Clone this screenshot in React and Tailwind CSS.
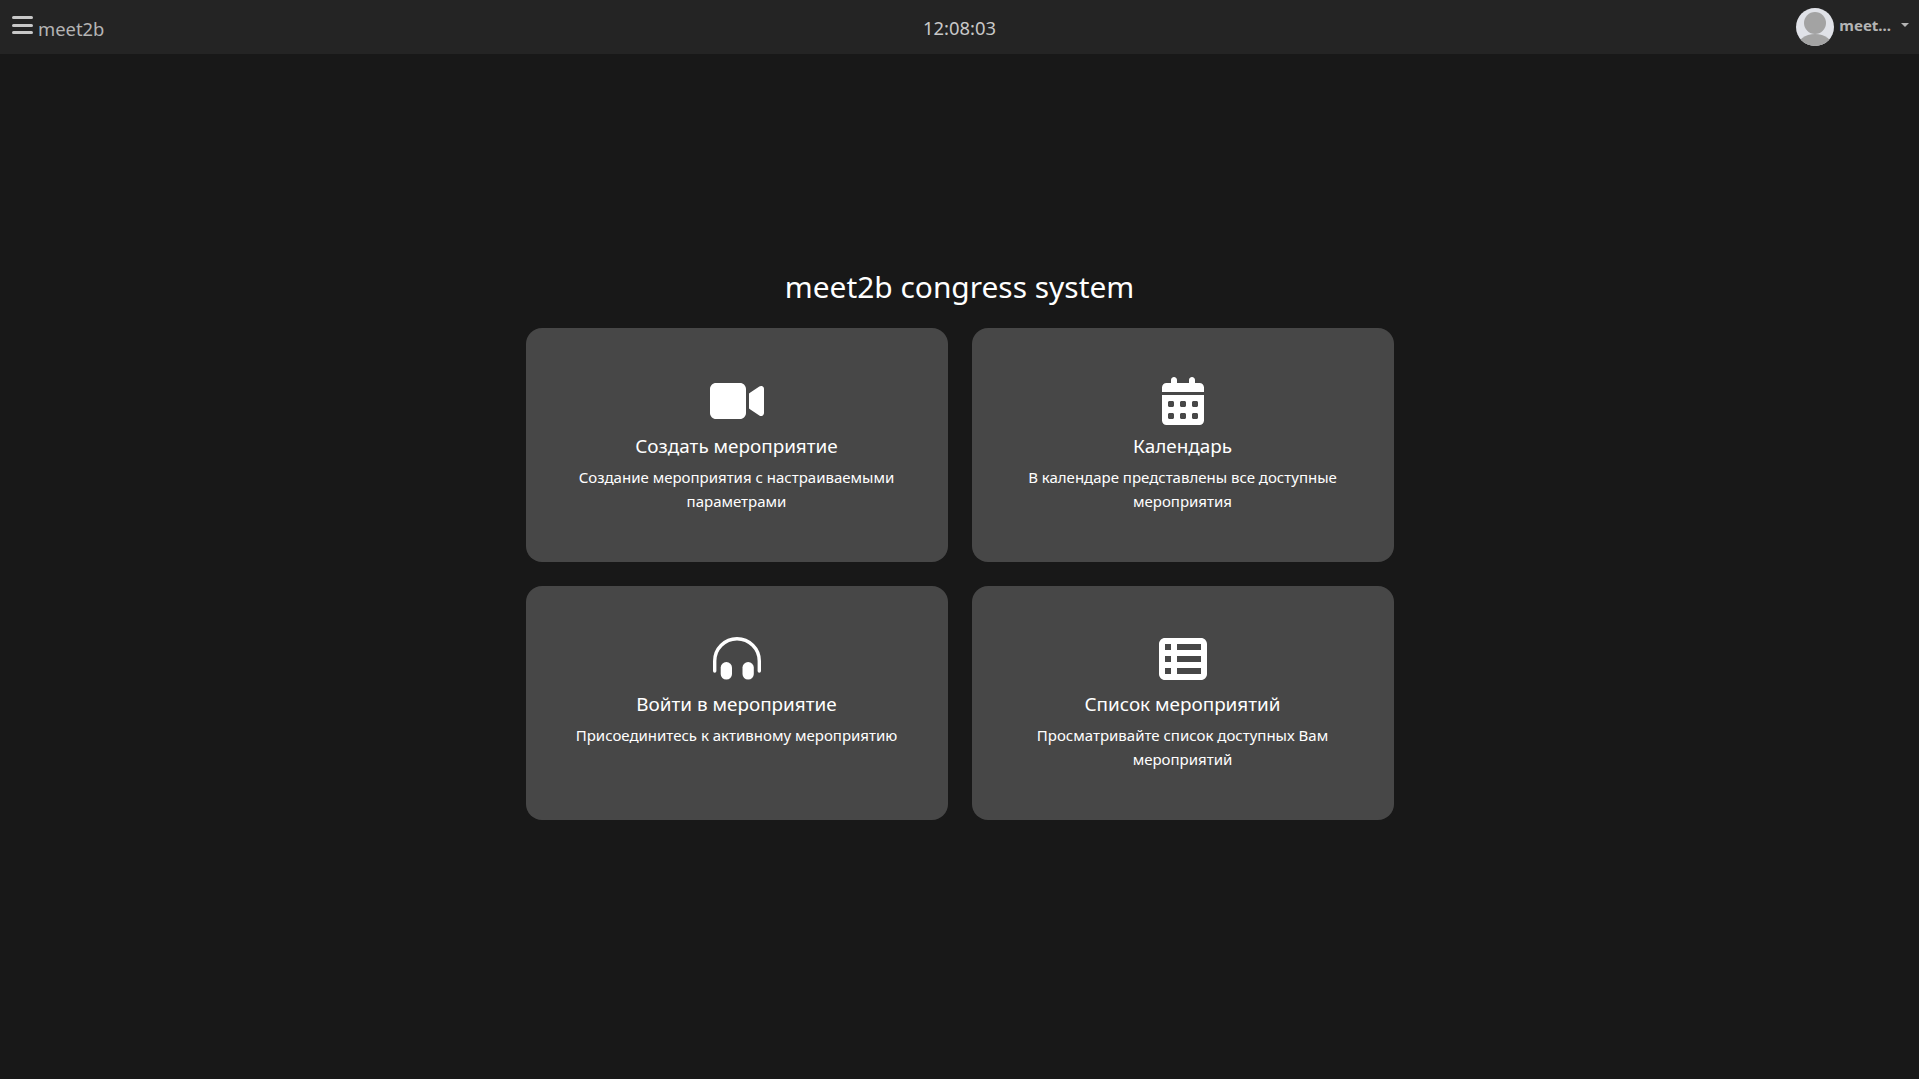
import { FaVideo, FaCalendarDays, FaTableList } from "react-icons/fa6";

// thin-arc headphones, the fa6 one has a heavier band than the reference
function Headphones({ className }) {
  return (
    <svg viewBox="0 0 48 48" className={className} fill="currentColor">
      <path
        d="M1.7 36V26a22.3 22.3 0 0 1 44.6 0V36"
        fill="none"
        stroke="currentColor"
        strokeWidth="3.4"
        strokeLinecap="round"
      />
      <rect x="7.7" y="27" width="11.3" height="17.6" rx="5.6" />
      <rect x="29.5" y="27" width="11.3" height="17.6" rx="5.6" />
    </svg>
  );
}

const cards = [
  {
    Icon: FaVideo,
    size: "w-[54px] h-[48px]",
    title: "Создать мероприятие",
    text: "Создание мероприятия с настраиваемыми параметрами",
  },
  {
    Icon: FaCalendarDays,
    size: "w-[48px] h-[48px]",
    title: "Календарь",
    text: "В календаре представлены все доступные мероприятия",
  },
  {
    Icon: Headphones,
    size: "w-[48px] h-[48px]",
    title: "Войти в мероприятие",
    text: "Присоединитесь к активному мероприятию",
  },
  {
    Icon: FaTableList,
    size: "w-[48px] h-[48px]",
    title: "Список мероприятий",
    text: "Просматривайте список доступных Вам мероприятий",
  },
];

function Avatar() {
  return (
    <svg viewBox="0 0 38 38" className="w-[38px] h-[38px] shrink-0">
      <defs>
        <clipPath id="avatar-clip">
          <circle cx="19" cy="19" r="19" />
        </clipPath>
      </defs>
      <g clipPath="url(#avatar-clip)">
        <rect width="38" height="38" fill="#e0e2e8" />
        <circle cx="19" cy="15" r="11" fill="#a3a3a3" />
        <ellipse cx="19" cy="40" rx="18" ry="14" fill="#a3a3a3" />
      </g>
    </svg>
  );
}

export default function App() {
  return (
    <div className="min-h-screen bg-[#181818] font-['Noto_Sans',sans-serif] text-white">
      <header className="relative flex items-center justify-between h-[54px] bg-[#242424] pl-3 pr-[10px]">
        <div className="flex items-center text-[#b4b4b4]">
          <div className="flex flex-col gap-[4.5px] w-[21px] -mt-[3px]">
            <span className="block h-[3px] bg-[#c8c8c8] rounded-sm" />
            <span className="block h-[3px] bg-[#c8c8c8] rounded-sm" />
            <span className="block h-[3px] bg-[#c8c8c8] rounded-sm" />
          </div>
          <span className="ml-[5px] text-[18.4px] mt-[4px]">meet2b</span>
        </div>
        <div className="absolute left-0 right-0 top-[16px] text-center text-[18.4px] leading-6 text-[#c8c8c8]">
          12:08:03
        </div>
        <div className="flex items-center">
          <Avatar />
          <span className="ml-[5px] text-[15px] font-bold text-[#b4b4b4] -mt-[4px]">meet...</span>
          <span className="ml-[10px] -mt-[4px] border-x-[4px] border-x-transparent border-t-[4px] border-t-[#b4b4b4]" />
        </div>
      </header>
      <main className="flex flex-col items-center pt-[211px]">
        <h1 className="text-[29.9px] leading-[44px] mb-[19px]">meet2b congress system</h1>
        <div className="grid grid-cols-[422px_422px] gap-6">
          {cards.map(({ Icon, size, title, text }) => (
            <div
              key={title}
              className="flex flex-col items-center h-[234px] rounded-2xl bg-[#474747] px-12 pt-[49px] text-center"
            >
              <Icon className={size} />
              <h2 className="mt-[6px] text-[18.9px] leading-[30px]">{title}</h2>
              <p className="mt-[4px] text-[15px] leading-6">{text}</p>
            </div>
          ))}
        </div>
      </main>
    </div>
  );
}
